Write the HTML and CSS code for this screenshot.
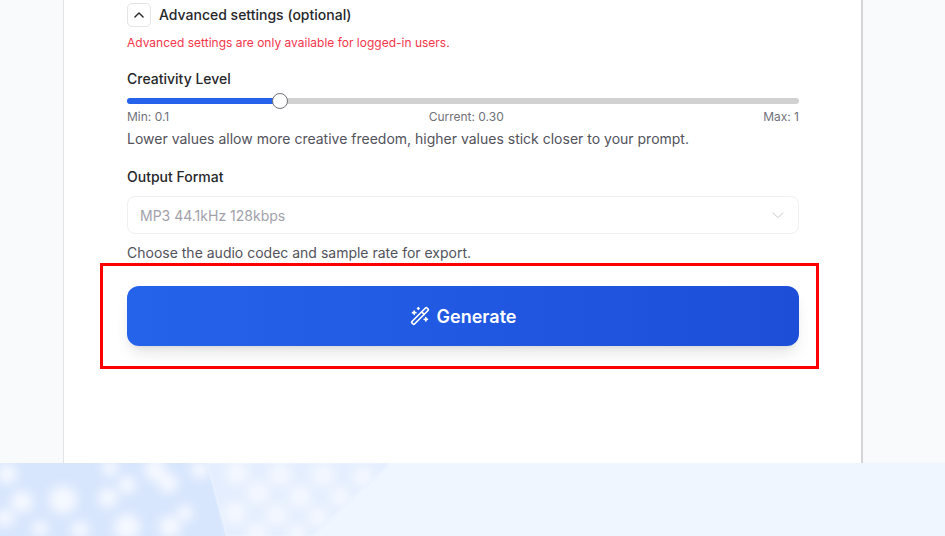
FILE: index.html
```html
<!DOCTYPE html>
<html>
<head>
    <title>Generate</title>
    <link rel="stylesheet" href="styles.css">
</head>
<body>
    <div class="top">
        <div class="card">
            <div class="adv-row">
                <span class="toggle">
                    <svg width="14" height="14" viewBox="0 0 24 24" fill="none" stroke="#27272a" stroke-width="2.4" stroke-linecap="round" stroke-linejoin="round"><path d="M5 15.5l7-7 7 7"/></svg>
                </span>
                <span class="adv-title">Advanced settings (optional)</span>
            </div>
            <p class="warn">Advanced settings are only available for logged-in users.</p>

            <div class="label creativity">Creativity Level</div>
            <div class="slider">
                <div class="slider-fill"></div>
                <div class="slider-thumb"></div>
            </div>
            <div class="scale">
                <span>Min: 0.1</span>
                <span class="scale-mid">Current: 0.30</span>
                <span>Max: 1</span>
            </div>
            <p class="hint">Lower values allow more creative freedom, higher values stick closer to your prompt.</p>

            <div class="label format">Output Format</div>
            <div class="select">
                <span>MP3 44.1kHz 128kbps</span>
                <svg width="14" height="14" viewBox="0 0 24 24" fill="none" stroke="#c9c9ce" stroke-width="1.7" stroke-linecap="round" stroke-linejoin="round"><path d="M3.5 8.5l8.5 8 8.5-8"/></svg>
            </div>
            <p class="hint hint-format">Choose the audio codec and sample rate for export.</p>

            <div class="generate-wrap">
                <button class="generate">
                    <svg width="20" height="20" viewBox="0 0 24 24" fill="none" stroke="#fff" stroke-width="2" stroke-linecap="round" stroke-linejoin="round">
                        <path d="M21.64 3.64l-1.28-1.28a1.21 1.21 0 0 0-1.72 0L2.36 18.64a1.21 1.21 0 0 0 0 1.72l1.28 1.28a1.2 1.2 0 0 0 1.72 0L21.64 5.36a1.2 1.2 0 0 0 0-1.72"/>
                        <path d="M14 7l3 3"/>
                        <path d="M5 6v4M7 8H3M19 14v4M21 16h-4M10 2v2M11 3H9"/>
                    </svg>
                    Generate
                </button>
                <div class="highlight"></div>
            </div>
        </div>
    </div>
    <div class="band">
        <svg class="band-art" width="945" height="73" viewBox="0 0 945 73">
            <defs>
                <filter id="soft" x="-60%" y="-60%" width="220%" height="220%"><feGaussianBlur stdDeviation="5"/></filter>
                <filter id="edge"><feGaussianBlur stdDeviation="1.5"/></filter>
                <clipPath id="clip-left"><polygon points="0,0 207,0 226,73 0,73"/></clipPath>
                <clipPath id="clip-mid"><polygon points="207,0 390,0 312,73 226,73"/></clipPath>
            </defs>
            <polygon points="0,0 207,0 226,73 0,73" fill="#d8e6fd"/>
            <polygon points="207,0 390,0 312,73 226,73" fill="#e4eefe" filter="url(#edge)"/>
            <g clip-path="url(#clip-left)">
                <g fill="#f4f8ff" filter="url(#soft)">
                    <circle cx="7" cy="11" r="10"/>
                    <circle cx="22" cy="39" r="11"/>
                    <circle cx="63" cy="37" r="14"/>
                    <circle cx="5" cy="55" r="9"/>
                    <circle cx="108" cy="35" r="10"/>
                    <circle cx="127" cy="22" r="9"/>
                    <circle cx="168" cy="20" r="10"/>
                    <circle cx="155" cy="7" r="11"/>
                    <circle cx="200" cy="7" r="9"/>
                    <circle cx="127" cy="64" r="13"/>
                    <circle cx="170" cy="64" r="11"/>
                    <circle cx="185" cy="50" r="8"/>
                    <circle cx="80" cy="67" r="9"/>
                    <circle cx="40" cy="66" r="8"/>
                    <circle cx="110" cy="5" r="8"/>
                </g>
            </g>
            <g clip-path="url(#clip-mid)">
                <g fill="#f3f7ff" filter="url(#soft)">
                    <circle cx="237" cy="10" r="12"/>
                    <circle cx="280" cy="12" r="12"/>
                    <circle cx="323" cy="12" r="12"/>
                    <circle cx="363" cy="14" r="11"/>
                    <circle cx="258" cy="30" r="12"/>
                    <circle cx="300" cy="34" r="12"/>
                    <circle cx="340" cy="34" r="11"/>
                    <circle cx="235" cy="50" r="12"/>
                    <circle cx="277" cy="52" r="12"/>
                    <circle cx="318" cy="54" r="11"/>
                    <circle cx="257" cy="70" r="11"/>
                    <circle cx="297" cy="70" r="10"/>
                </g>
            </g>
        </svg>
    </div>
</body>
</html>
```

FILE: styles.css
```css
* {
    box-sizing: border-box;
}

html, body {
    margin: 0;
    padding: 0;
    height: 536px;
    overflow: hidden;
}

body {
    font-family: Inter, "Liberation Sans", sans-serif;
    background: #eff6ff;
    color: #27272a;
}

.top {
    height: 463px;
    padding-left: 63px;
    background: #f9fafb;
}

.card {
    width: 800px;
    height: 463px;
    padding: 3px 62px 0 63px;
    background: #fff;
    border-left: 1px solid #e4e4e7;
    border-right: 2px solid #d4d4d8;
}

.adv-row {
    display: flex;
    align-items: center;
    gap: 8px;
    height: 24px;
}

.toggle {
    width: 24px;
    height: 24px;
    display: flex;
    align-items: center;
    justify-content: center;
    border: 1px solid #e4e4e7;
    border-radius: 5px;
}

.adv-title {
    font-size: 14px;
    font-weight: 500;
    line-height: 20px;
}

.warn {
    margin: 8px 0 0;
    font-size: 12px;
    line-height: 16px;
    color: #f5354b;
}

.label {
    font-size: 14px;
    font-weight: 500;
    line-height: 20px;
}

.creativity {
    margin-top: 18px;
}

.slider {
    position: relative;
    height: 6px;
    margin-top: 9px;
    background: #d1d1d1;
    border-radius: 3px;
}

.slider-fill {
    width: 153px;
    height: 6px;
    background: #2563eb;
    border-radius: 3px 0 0 3px;
}

.slider-thumb {
    position: absolute;
    left: 145px;
    top: -5px;
    width: 16px;
    height: 16px;
    background: #fff;
    border: 1px solid #71717a;
    border-radius: 50%;
}

.scale {
    display: flex;
    justify-content: space-between;
    margin-top: 5px;
    font-size: 12px;
    line-height: 16px;
    color: #71717a;
}

.hint {
    margin: 4px 0 0;
    font-size: 14px;
    line-height: 20px;
    color: #52525b;
}

.format {
    margin-top: 18px;
}

.select {
    display: flex;
    align-items: center;
    justify-content: space-between;
    height: 38px;
    margin-top: 9px;
    padding: 0 13px 0 12px;
    border: 1px solid #f0f0f2;
    border-radius: 8px;
    font-size: 14px;
    color: #a1a1aa;
}

.hint-format {
    margin-top: 9px;
}

.generate-wrap {
    position: relative;
    margin-top: 23px;
}

.generate {
    display: flex;
    align-items: center;
    justify-content: center;
    gap: 7px;
    width: 100%;
    height: 60px;
    border: 0;
    border-radius: 12px;
    background: linear-gradient(90deg, #2563eb, #1d4ed8);
    box-shadow: 0 10px 15px -3px rgba(0, 0, 0, 0.1), 0 4px 6px -4px rgba(0, 0, 0, 0.1);
    color: #fff;
    font-family: inherit;
    font-size: 18px;
    font-weight: 600;
}

/* red annotation box drawn over the button */
.highlight {
    position: absolute;
    top: -23px;
    left: -27px;
    right: -20px;
    bottom: -23px;
    border: 3px solid #ff0000;
}

.band {
    height: 73px;
    background: #eff6ff;
}

.band-art {
    display: block;
}
```
